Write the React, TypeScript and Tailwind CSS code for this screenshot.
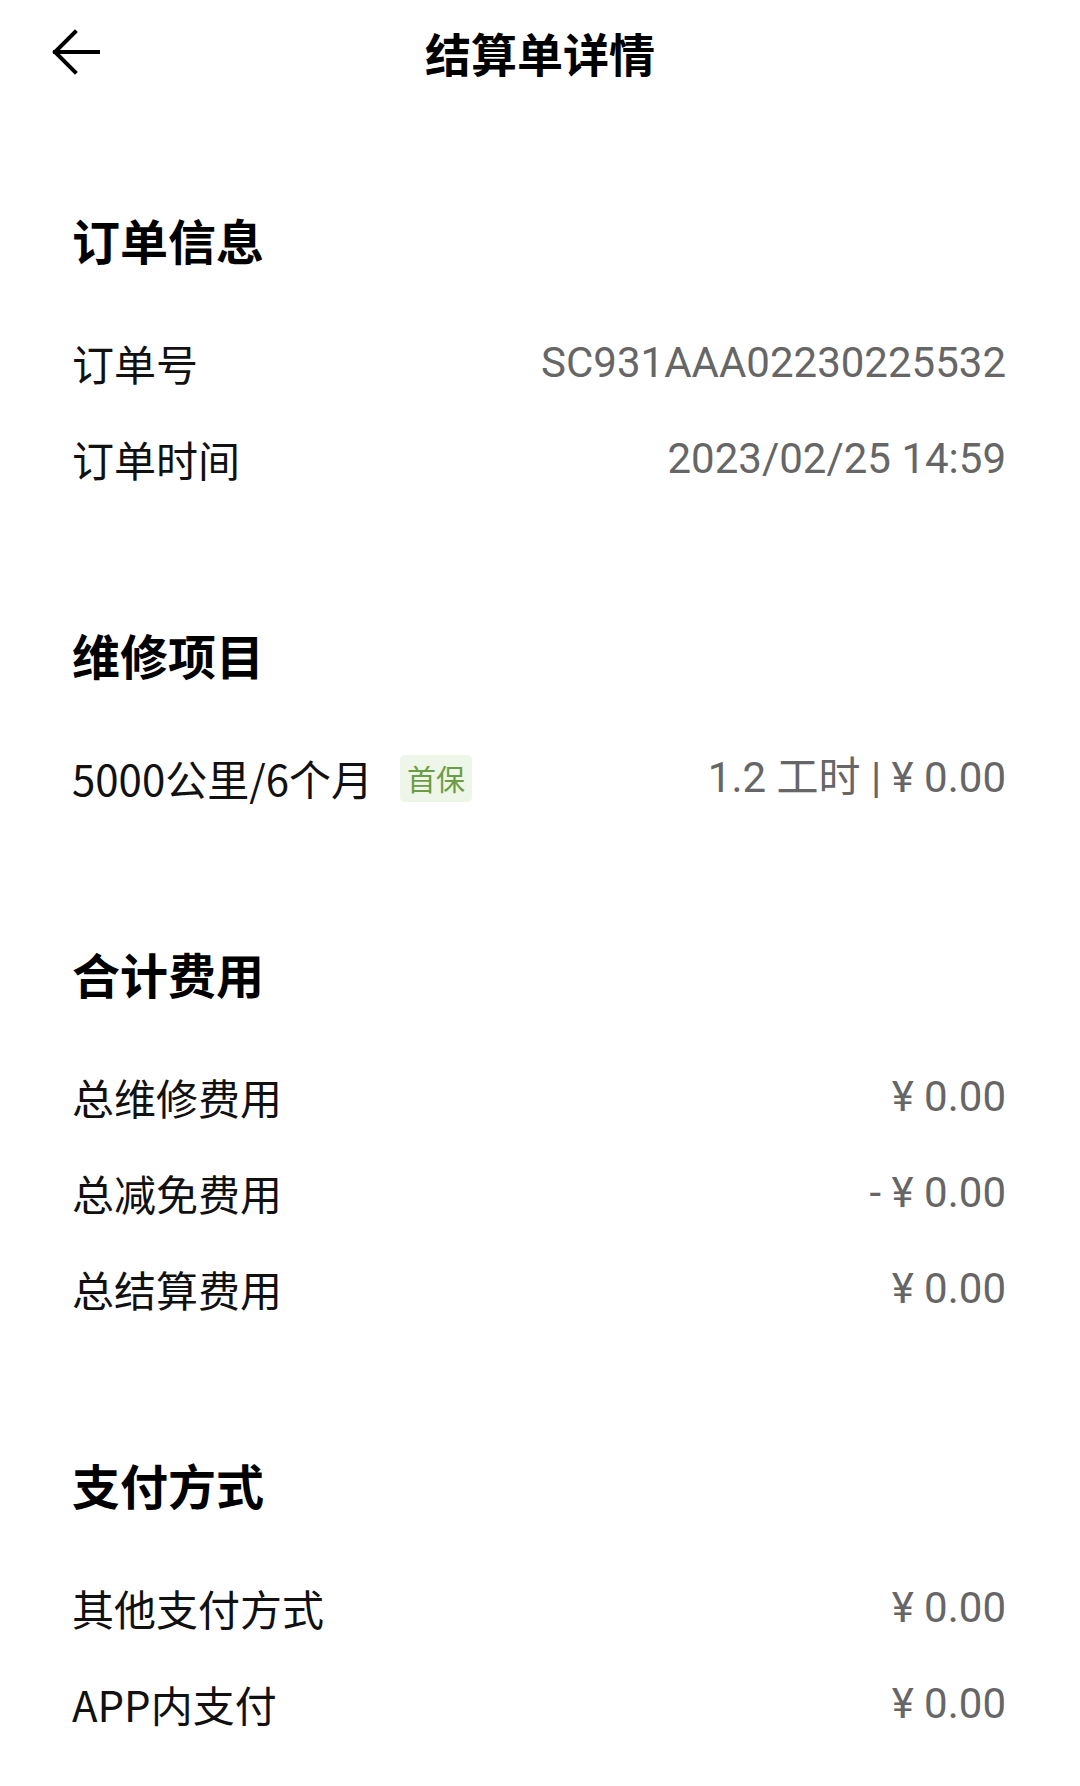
type Row = { label: string; value: string };

const font = { fontFamily: '"Noto Sans CJK SC", "Noto Sans", sans-serif' };
const numFont = { fontFamily: 'Roboto, "Noto Sans CJK SC", sans-serif' };

function BackArrow() {
  return (
    <svg width="50" height="46" viewBox="0 0 50 46" fill="none" stroke="currentColor" strokeWidth="4" strokeLinecap="square" strokeLinejoin="miter">
      <path d="M4 23H47" />
      <path d="M24 3L4 23L24 43" />
    </svg>
  );
}

function Header({ title }: { title: string }) {
  return (
    <div className="flex h-[96px] items-center text-[48px] font-bold leading-none text-black">
      {title}
    </div>
  );
}

function InfoRow({ label, value }: Row) {
  return (
    <div className="flex h-[96px] items-center justify-between text-[42px] leading-none">
      <span className="text-[#111]">{label}</span>
      <span className="text-[#666]" style={numFont}>
        {value}
      </span>
    </div>
  );
}

const sections: { title: string; rows: Row[] }[] = [
  {
    title: "合计费用",
    rows: [
      { label: "总维修费用", value: "¥ 0.00" },
      { label: "总减免费用", value: "- ¥ 0.00" },
      { label: "总结算费用", value: "¥ 0.00" },
    ],
  },
  {
    title: "支付方式",
    rows: [
      { label: "其他支付方式", value: "¥ 0.00" },
      { label: "APP内支付", value: "¥ 0.00" },
    ],
  },
];

export default function App() {
  return (
    <div className="min-h-[1786px] w-[1080px] bg-white" style={font}>
      <div className="relative flex h-[104px] items-center justify-center">
        <button className="absolute left-[51px] top-[29px] text-black" aria-label="返回">
          <BackArrow />
        </button>
        <h1 className="text-[46px] font-bold leading-none text-black">结算单详情</h1>
      </div>

      <div className="flex flex-col gap-[99px] pl-[72px] pr-[74px] pt-[87px]">
        <section>
          <Header title="订单信息" />
          <div className="mt-[28px]">
            <InfoRow label="订单号" value="SC931AAA02230225532" />
            <InfoRow label="订单时间" value="2023/02/25 14:59" />
          </div>
        </section>

        <section>
          <Header title="维修项目" />
          <div className="mt-[28px] flex h-[96px] items-center justify-between text-[42px] leading-none">
            <div className="flex items-center gap-[27px]">
              <span className="text-[#111]">5000公里/6个月</span>
              <span className="flex h-[47px] w-[72px] items-center justify-center rounded-[5px] bg-[#eef6e9] text-[29px] text-[#6c9d45]">
                首保
              </span>
            </div>
            <span className="text-[#666]" style={numFont}>
              1.2 工时 | ¥ 0.00
            </span>
          </div>
        </section>

        {sections.map((s) => (
          <section key={s.title}>
            <Header title={s.title} />
            <div className="mt-[28px]">
              {s.rows.map((r) => (
                <InfoRow key={r.label} label={r.label} value={r.value} />
              ))}
            </div>
          </section>
        ))}
      </div>
    </div>
  );
}
